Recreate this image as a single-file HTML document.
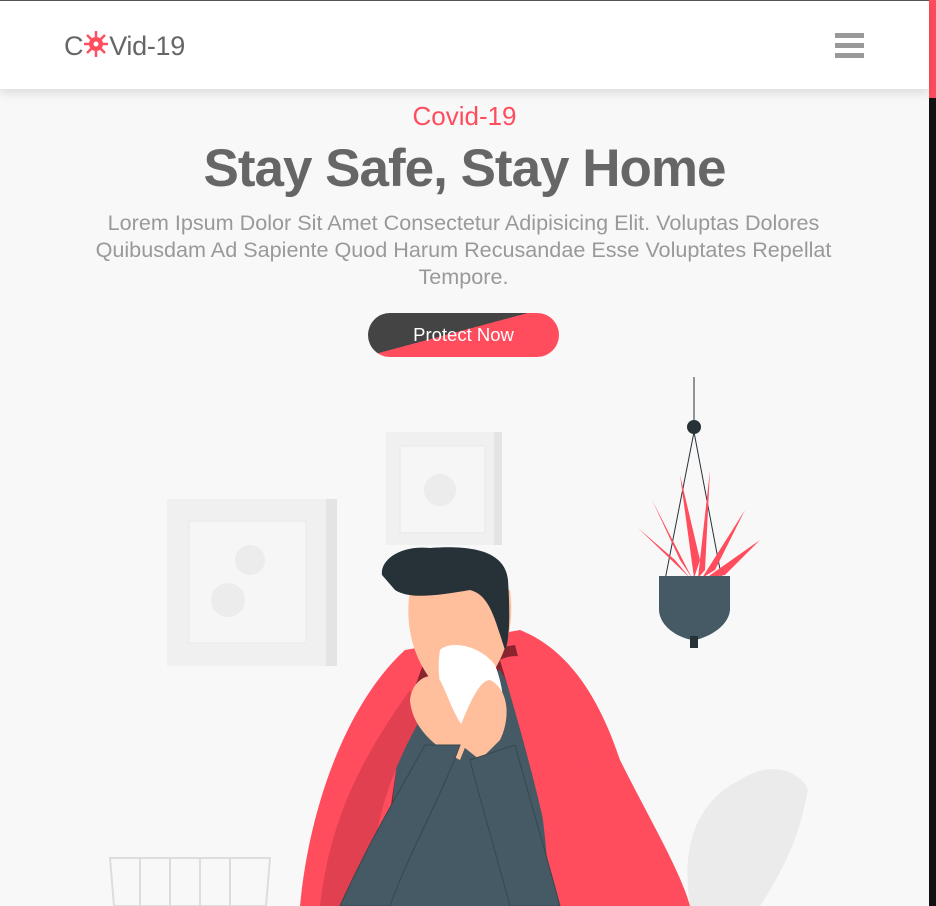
<!DOCTYPE html>
<html><head><meta charset="utf-8"><style>
*{margin:0;padding:0;box-sizing:border-box}
html,body{width:936px;height:906px;overflow:hidden;background:#f8f8f8;font-family:"Liberation Sans",sans-serif}
.top{position:absolute;left:0;top:0;width:929px;height:1px;background:#555}
.hdr{position:absolute;left:0;top:1px;width:929px;height:88px;background:#fff;box-shadow:0 4px 10px rgba(0,0,0,.12);z-index:2}
.logo{position:absolute;left:64px;top:29px;font-size:27px;color:#666;letter-spacing:-0.3px}
.logo svg{vertical-align:-3px}
.burger{position:absolute;left:835px;top:32px;width:29px}
.burger i{display:block;height:5px;background:#999;margin-bottom:5px}
.sb{position:absolute;left:929px;top:0;width:7px;height:906px;background:#111}
.sb:after{content:"";position:absolute;left:0;top:0;width:7px;height:98px;background:#ff4d5e}
.sub{position:absolute;top:101px;width:929px;text-align:center;color:#ff4d5e;font-size:26px}
h1{position:absolute;top:138px;width:929px;text-align:center;color:#666;font-size:53px;font-weight:bold;letter-spacing:-1px}
p{position:absolute;top:209px;left:60px;width:807px;text-align:center;color:#999;font-size:21.6px;line-height:27px}
.btn{position:absolute;left:368px;top:313px;width:191px;height:44px;border-radius:22px;background:linear-gradient(165deg,#444 0 45%,#ff4d5e 45%);color:#fff;font-size:18.5px;text-align:center;line-height:44px}
svg.ill{position:absolute;left:0;top:360px}
</style></head><body>
<div class="top"></div>
<div class="hdr">
 <div class="logo">C<svg width="26" height="28" viewBox="-13 -14 26 28"><g fill="#ff4d5e"><circle r="7"/><g stroke="#ff4d5e" stroke-width="2.5"><line y1="-13" y2="13"/><line x1="-12" x2="12"/><line x1="-9" y1="-9" x2="9" y2="9"/><line x1="9" y1="-9" x2="-9" y2="9"/></g><circle r="2.5" fill="#fff"/></g></svg>Vid-19</div>
 <div class="burger"><i></i><i></i><i></i></div>
</div>
<div class="sb"></div>
<div class="sub">Covid-19</div>
<h1>Stay Safe, Stay Home</h1>
<p>Lorem Ipsum Dolor Sit Amet Consectetur Adipisicing Elit. Voluptas Dolores Quibusdam Ad Sapiente Quod Harum Recusandae Esse Voluptates Repellat Tempore.</p>
<div class="btn">Protect Now</div>
<svg class="ill" width="929" height="546" viewBox="0 360 929 546">
 <rect x="167" y="499" width="170" height="167" fill="#f0f0f0"/>
 <rect x="326" y="499" width="11" height="167" fill="#e4e4e4"/>
 <rect x="189" y="521" width="117" height="122" fill="#f6f6f6" stroke="#e8e8e8"/>
 <circle cx="250" cy="560" r="15" fill="#ececec"/><circle cx="228" cy="600" r="17" fill="#ececec"/>
 <rect x="386" y="432" width="116" height="113" fill="#f0f0f0"/>
 <rect x="494" y="432" width="8" height="113" fill="#e4e4e4"/>
 <rect x="400" y="446" width="85" height="87" fill="#f6f6f6" stroke="#e8e8e8"/>
 <circle cx="440" cy="490" r="16" fill="#ececec"/>
 <path d="M690 906 C680 840 700 800 740 780 C770 760 800 770 808 790 C800 830 790 860 760 906Z" fill="#ebebeb"/>
 <path d="M110 858 H270 L266 906 H114Z" fill="none" stroke="#ddd" stroke-width="2"/>
 <path d="M140 858V906M170 858V906M200 858V906M230 858V906" stroke="#ddd" stroke-width="2"/>
 <line x1="694" y1="377" x2="694" y2="420" stroke="#263238"/>
 <circle cx="694" cy="427" r="7" fill="#263238"/>
 <path d="M694 432 L665 580 M694 432 L722 580" stroke="#263238"/>
 <g fill="#ff4d5e">
  <path d="M690 578 L638 528 L675 560Z"/><path d="M692 578 L652 500 L680 560Z"/>
  <path d="M694 578 L680 475 L700 560Z"/><path d="M698 578 L710 470 L705 570Z"/>
  <path d="M702 578 L745 510 L715 570Z"/><path d="M706 578 L760 540 L725 575Z"/>
 </g>
 <path d="M659 576 H730 V610 C728 630 700 640 694 640 C685 640 660 630 659 610Z" fill="#455a64"/>
 <rect x="690" y="636" width="8" height="12" fill="#263238"/>
 <path d="M300 906 C310 800 350 700 405 650 L520 630 C570 650 600 700 620 760 C650 820 680 870 690 906Z" fill="#ff4d5e"/>
 <path d="M425 660 L515 645 C530 700 540 780 550 906 H380 C390 800 400 720 425 660Z" fill="#8a2530"/>
 <path d="M390 906 C390 800 395 730 420 690 L500 670 C530 720 545 800 550 906Z" fill="#455a64"/>
 <path d="M500 660 C540 640 570 700 580 770 C600 840 620 880 640 906 H560 C550 840 530 760 500 660Z" fill="#ff4d5e"/>
 <path d="M320 906 C330 820 360 760 410 690 L420 720 C380 790 370 850 370 906Z" fill="#e0404f"/>
 <path d="M410 590 C405 620 410 660 440 690 L480 690 C505 660 515 630 510 590Z" fill="#ffbf9d"/>
 <path d="M382 575 C380 560 400 545 430 548 C470 545 505 550 508 580 C510 610 510 640 505 650 C495 620 490 595 470 590 C440 595 410 600 395 590Z" fill="#263238"/>
 <path d="M440 650 C450 640 480 645 495 665 C505 690 505 715 500 730 L455 735 C445 710 435 680 440 650Z" fill="#fff"/>
 <path d="M440 680 C430 670 412 680 410 700 C412 730 440 750 460 760 L470 735 C455 720 450 700 440 680Z" fill="#ffbf9d"/>
 <path d="M455 740 C470 700 480 680 490 680 C510 690 510 720 500 740 L480 760Z" fill="#ffbf9d"/>
 <path d="M425 745 L460 745 C440 800 410 850 390 906 L340 906 C370 840 400 790 425 745Z" fill="#455a64" stroke="#37474f"/>
 <path d="M470 760 L515 745 C530 800 545 850 560 906 H510 C495 850 480 800 470 760Z" fill="#455a64" stroke="#37474f"/>
</svg>
</body></html>
